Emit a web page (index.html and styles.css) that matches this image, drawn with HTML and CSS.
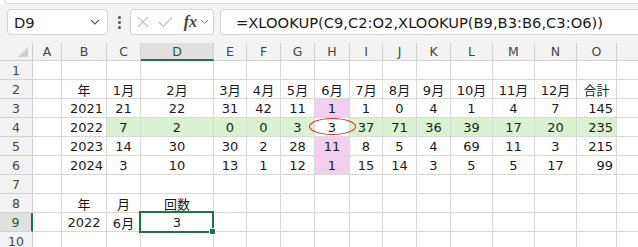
FILE: index.html
```html
<!DOCTYPE html>
<html lang="ja">
<head>
    <meta charset="UTF-8">
    <title>XLOOKUP</title>
    <link rel="stylesheet" href="styles.css">
</head>
<body>
    <div class="ribbon-edge"></div>
    <div class="formula-bar">
        <div class="name-box">
            <span>D9</span>
            <svg width="10" height="6" viewBox="0 0 10 6"><path d="M1 1 L5 5 L9 1" fill="none" stroke="#555" stroke-width="1.1"/></svg>
        </div>
        <div class="dots"><i></i><i></i><i></i></div>
        <div class="fn-box">
            <svg width="12" height="12" viewBox="0 0 12 12"><path d="M1 1 L11 11 M11 1 L1 11" fill="none" stroke="#bdbdbd" stroke-width="1.1"/></svg>
            <svg width="15" height="12" viewBox="0 0 15 12"><path d="M1 6 L5.5 10.5 L14 1.5" fill="none" stroke="#bdbdbd" stroke-width="1.1"/></svg>
            <span class="fx">fx</span>
            <svg width="9" height="6" viewBox="0 0 9 6"><path d="M1 1 L4.5 4.5 L8 1" fill="none" stroke="#777" stroke-width="1"/></svg>
        </div>
        <div class="formula-box">=XLOOKUP(C9,C2:O2,XLOOKUP(B9,B3:B6,C3:O6))</div>
    </div>

    <div class="sheet-wrap">
        <div class="sheet" id="sheet"></div>
        <div class="mark"></div>
    </div>

    <script>
        const sheet = document.getElementById('sheet');
        const letters = ['A','B','C','D','E','F','G','H','I','J','K','L','M','N','O',''];

        const rows = [
            [],
            ['', '年', '1月', '2月', '3月', '4月', '5月', '6月', '7月', '8月', '9月', '10月', '11月', '12月', '合計'],
            ['', 2021, 21, 22, 31, 42, 11, 1, 1, 0, 4, 1, 4, 7, 145],
            ['', 2022, 7, 2, 0, 0, 3, 3, 37, 71, 36, 39, 17, 20, 235],
            ['', 2023, 14, 30, 30, 2, 28, 11, 8, 5, 4, 69, 11, 3, 215],
            ['', 2024, 3, 10, 13, 1, 12, 1, 15, 14, 3, 5, 5, 17, 99],
            [],
            ['', '年', '月', '回数'],
            ['', 2022, '6月', 3],
            []
        ];

        let html = '<div class="corner"><svg width="10" height="10" viewBox="0 0 10 10"><path d="M10 0 L10 10 L0 10 Z" fill="#d0d0d0"/></svg></div>';
        letters.forEach(l => {
            html += `<div class="col-head${l === 'D' ? ' active' : ''}">${l}</div>`;
        });

        rows.forEach((row, r) => {
            const rowNo = r + 1;
            html += `<div class="row-head${rowNo === 9 ? ' active' : ''}">${rowNo}</div>`;
            for (let c = 0; c < letters.length; c++) {
                const v = row[c] === undefined ? '' : row[c];
                const cls = ['cell'];
                if (rowNo >= 3 && rowNo <= 6 && (c === 1 || c === 14)) cls.push('right');
                if (letters[c] === 'H' && rowNo >= 3 && rowNo <= 6 && rowNo !== 4) cls.push('pink');
                if (rowNo === 4 && c >= 2 && c <= 14 && letters[c] !== 'H') cls.push('green');
                if (rowNo === 9 && letters[c] === 'D') cls.push('selected');
                html += `<div class="${cls.join(' ')}">${v}</div>`;
            }
        });

        sheet.innerHTML = html;
    </script>
</body>
</html>
```

FILE: styles.css
```css
body {
    margin: 0;
    background-color: #ffffff;
    font-family: 'DejaVu Sans', 'Noto Sans CJK JP', sans-serif;
    overflow: hidden;
}
.ribbon-edge {
    height: 3px;
    margin-left: 4px;
    background-color: #ffffff;
    border-bottom: 1px solid #d6d6d6;
    border-bottom-left-radius: 6px;
    border-left: 1px solid #d6d6d6;
}
.formula-bar {
    height: 39px;
    background-color: #f3f3f3;
    box-sizing: border-box;
    padding: 5px 0 8px 7px;
    display: flex;
    align-items: stretch;
}
.name-box {
    width: 101px;
    box-sizing: border-box;
    background-color: #fff;
    border: 1px solid #d4d4d4;
    border-radius: 4px;
    display: flex;
    align-items: center;
    justify-content: space-between;
    padding: 0 7px 0 6px;
    font-size: 14.7px;
    color: #222;
}
.dots {
    width: 22px;
    display: flex;
    flex-direction: column;
    align-items: center;
    justify-content: center;
    gap: 2px;
}
.dots i {
    display: block;
    width: 3px;
    height: 3px;
    border-radius: 50%;
    background-color: #555;
}
.fn-box {
    width: 84px;
    box-sizing: border-box;
    background-color: #fff;
    border: 1px solid #d4d4d4;
    border-radius: 4px;
    display: flex;
    align-items: center;
    padding: 0 4px 0 6px;
    gap: 9px;
    margin-right: 6px;
}
.fn-box .fx {
    font-family: 'Liberation Serif', serif;
    font-style: italic;
    font-weight: bold;
    font-size: 16px;
    color: #444;
    margin-left: 2px;
    margin-right: -6px;
}
.formula-box {
    flex: 1;
    background-color: #fff;
    border: 1px solid #d4d4d4;
    border-right: none;
    border-radius: 4px 0 0 4px;
    display: flex;
    align-items: center;
    padding-left: 15px;
    font-size: 14.7px;
    color: #1a1a1a;
    white-space: nowrap;
}
.sheet-wrap {
    position: relative;
    overflow: hidden;
    height: 204px;
}
.sheet {
    display: grid;
    grid-template-columns: 33px 29px 45px 34px 73px 33px 34px 34px 35px 33px 34px 34px 42px 42px 42px 40px 60px;
    grid-template-rows: 18px;
    grid-auto-rows: 19px;
    width: 700px;
}
.corner, .col-head, .row-head, .cell {
    box-sizing: border-box;
    border-right: 1px solid #d9d9d9;
    border-bottom: 1px solid #d9d9d9;
    display: flex;
    align-items: center;
    justify-content: center;
    white-space: nowrap;
}
.corner {
    background-color: #f3f3f3;
    align-items: flex-end;
    justify-content: flex-end;
    padding: 0 4px 3px 0;
    border-color: #cfcfcf;
}
.col-head, .row-head {
    background-color: #f3f3f3;
    color: #444;
    font-size: 12.5px;
    border-color: #d2d2d2;
}
.col-head.active {
    background-color: #e0e0e0;
    color: #1d5b38;
    border-bottom: 2px solid #217346;
}
.row-head.active {
    background-color: #e0e0e0;
    color: #1d5b38;
    border-right: 2px solid #217346;
}
.cell {
    font-size: 13px;
    color: #1a1a1a;
}
.cell.right {
    justify-content: flex-end;
    padding-right: 3px;
}
.green {
    background-color: #daf2d0;
}
.pink {
    background-color: #f2ceef;
}
.selected {
    position: relative;
}
.selected::after {
    content: '';
    position: absolute;
    left: -2px;
    top: -2px;
    right: -1px;
    bottom: -2px;
    border: 2px solid #217346;
}
.selected::before {
    content: '';
    position: absolute;
    right: -3px;
    bottom: -4px;
    width: 5px;
    height: 5px;
    background-color: #217346;
    border: 1px solid #fff;
    z-index: 2;
}
.mark {
    position: absolute;
    left: 309px;
    top: 75px;
    width: 47px;
    height: 17px;
    box-sizing: border-box;
    border: 1.5px solid #e3262b;
    border-radius: 50%;
}
```
